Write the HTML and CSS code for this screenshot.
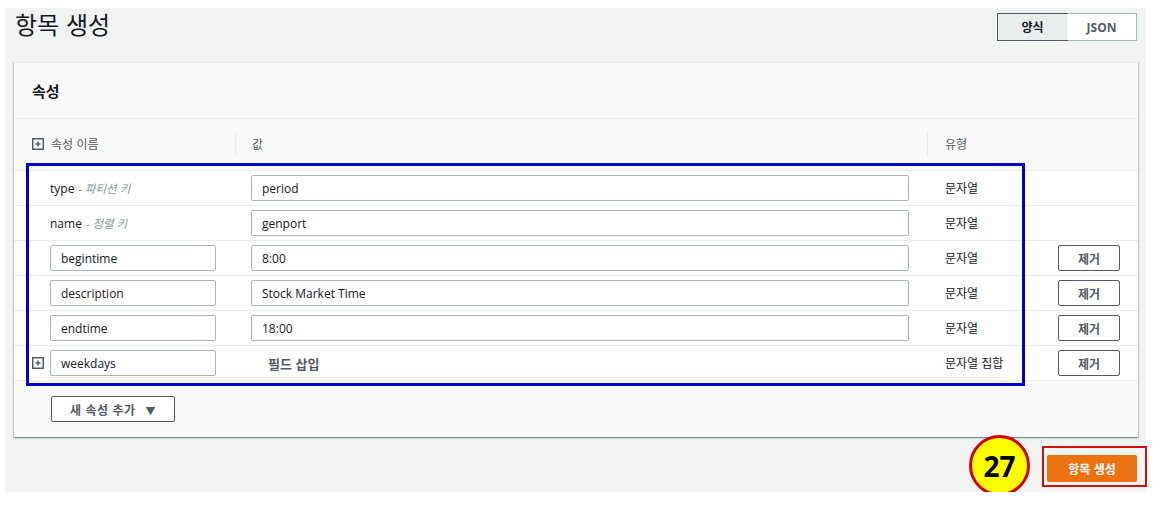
FILE: index.html
```html
<!DOCTYPE html>
<html lang="ko">
<head>
<meta charset="utf-8">
<title>항목 생성</title>
<link rel="stylesheet" href="styles.css">
</head>
<body>
<div class="page">
  <div class="top">
    <h1 class="title">항목 생성</h1>
    <div class="toggle">
      <button class="seg active">양식</button>
      <button class="seg">JSON</button>
    </div>
  </div>

  <section class="card">
    <div class="card-head">속성</div>
    <div class="table">
      <div class="row thead">
        <div class="cell c1"><svg class="plus" viewBox="0 0 12 12" width="12" height="12"><rect x="0.75" y="0.75" width="10.5" height="10.5" fill="none" stroke="#545b64" stroke-width="1.5"/><path d="M3.5 6h5M6 3.5v5" stroke="#545b64" stroke-width="1.5"/></svg><span class="hlabel">속성 이름</span></div>
        <div class="cell c2"><span class="hdiv"></span><span class="hlabel">값</span></div>
        <div class="cell c3"><span class="hdiv"></span><span class="hlabel">유형</span></div>
        <div class="cell c4"></div>
      </div>

      <div class="row">
        <div class="cell c1 pad"><span class="key">type</span><span class="keynote">- 파티션 키</span></div>
        <div class="cell c2"><input class="field val" value="period"></div>
        <div class="cell c3">문자열</div>
        <div class="cell c4"></div>
      </div>
      <div class="row">
        <div class="cell c1 pad"><span class="key">name</span><span class="keynote">- 정렬 키</span></div>
        <div class="cell c2"><input class="field val" value="genport"></div>
        <div class="cell c3">문자열</div>
        <div class="cell c4"></div>
      </div>
      <div class="row">
        <div class="cell c1 pad"><input class="field name" value="begintime"></div>
        <div class="cell c2"><input class="field val" value="8:00"></div>
        <div class="cell c3">문자열</div>
        <div class="cell c4"><button class="btn">제거</button></div>
      </div>
      <div class="row">
        <div class="cell c1 pad"><input class="field name" value="description"></div>
        <div class="cell c2"><input class="field val" value="Stock Market Time"></div>
        <div class="cell c3">문자열</div>
        <div class="cell c4"><button class="btn">제거</button></div>
      </div>
      <div class="row">
        <div class="cell c1 pad"><input class="field name" value="endtime"></div>
        <div class="cell c2"><input class="field val" value="18:00"></div>
        <div class="cell c3">문자열</div>
        <div class="cell c4"><button class="btn">제거</button></div>
      </div>
      <div class="row">
        <div class="cell c1"><svg class="plus" viewBox="0 0 12 12" width="12" height="12"><rect x="0.75" y="0.75" width="10.5" height="10.5" fill="none" stroke="#545b64" stroke-width="1.5"/><path d="M3.5 6h5M6 3.5v5" stroke="#545b64" stroke-width="1.5"/></svg><input class="field name" value="weekdays"></div>
        <div class="cell c2"><span class="insert">필드 삽입</span></div>
        <div class="cell c3">문자열 집합</div>
        <div class="cell c4"><button class="btn">제거</button></div>
      </div>
    </div>
    <div class="card-foot">
      <button class="btn add">새 속성 추가 <span class="caret">▼</span></button>
    </div>
    <div class="hl-blue"></div>
  </section>

  <div class="actions">
    <span class="badge">27</span>
    <button class="primary">항목 생성<span class="hl-red"></span></button>
  </div>
</div>
</body>
</html>
```

FILE: styles.css
```css
* { box-sizing: border-box; }

body {
  margin: 0;
  background: #ffffff;
  font-family: "Open Sans", "Noto Sans CJK KR", sans-serif;
  font-size: 12px;
  color: #16191f;
}

.page {
  position: relative;
  margin: 8px 0 0 5px;
  width: 1141px;
  height: 484px;
  background: #f2f3f3;
  padding: 0 8px 0 9px;
}

.top {
  display: flex;
  justify-content: space-between;
  align-items: flex-start;
  height: 54px;
}

.title {
  margin: 0 0 0 1px;
  font-family: "Noto Sans CJK KR", sans-serif;
  font-weight: 400;
  font-size: 24px;
  line-height: 31px;
  color: #16191f;
}

.toggle {
  margin-top: 5px;
  margin-right: 1px;
  display: flex;
  border: 1px solid #aab7b8;
  background: #fff;
}

.seg {
  width: 69px;
  height: 26px;
  border: 0;
  background: #fff;
  font-family: "Open Sans", "Noto Sans CJK KR", sans-serif;
  font-size: 12px;
  font-weight: 700;
  color: #545b64;
  padding: 0;
}

.seg.active {
  background: #eaeded;
  color: #16191f;
  outline: 1px solid #545b64;
}

.card {
  position: relative;
  height: 375px;
  background: #fafafa;
  border-top: 1px solid #eaeded;
  box-shadow: 0 1px 1px 0 rgba(0, 28, 36, 0.3), 1px 1px 1px 0 rgba(0, 28, 36, 0.15), -1px 1px 1px 0 rgba(0, 28, 36, 0.15);
}

.card-head {
  height: 56px;
  display: flex;
  align-items: center;
  padding-left: 18px;
  font-family: "Noto Sans CJK KR", sans-serif;
  font-size: 15px;
  font-weight: 700;
  color: #16191f;
  border-bottom: 1px solid #eaeded;
}

.row {
  display: grid;
  grid-template-columns: 221px 692px 113px 98px;
  height: 35px;
  background: #fff;
  border-bottom: 1px solid #eaeded;
  align-items: center;
}

.row.thead {
  height: 52px;
  background: #fafafa;
  border-bottom: 1px solid #eaeded;
  padding-bottom: 2px;
}

.cell {
  display: flex;
  align-items: center;
  height: 100%;
  position: relative;
}

.c1 { padding-left: 18px; gap: 6px; }
.c1.pad { padding-left: 36px; gap: 4px; }
.c2 { padding-left: 16px; }
.c3 { padding-left: 18px; color: #16191f; }
.c4 { padding-left: 18px; }

.thead .c1 { gap: 7px; }
.thead .c3 { padding-left: 18px; }
.thead .c2 { padding-left: 17px; }

.hdiv {
  position: absolute;
  left: 0;
  top: 13px;
  height: 24px;
  border-left: 1px solid #eaeded;
}

.hlabel {
  font-family: "Noto Sans CJK KR", sans-serif;
  color: #545b64;
}

.plus { display: block; flex: none; }

.key { color: #16191f; }
.keynote {
  color: #879596;
  font-style: italic;
  font-size: 11.5px;
}

.field {
  height: 26px;
  border: 1px solid #aab7b8;
  border-radius: 2px;
  padding: 0 10px;
  font-family: "Open Sans", "Noto Sans CJK KR", sans-serif;
  font-size: 12px;
  color: #16191f;
  background: #fff;
}

.field.name { width: 166px; }
.field.val { width: 658px; }

.insert {
  margin-left: 17px;
  font-family: "Noto Sans CJK KR", sans-serif;
  font-size: 13px;
  font-weight: 700;
  color: #545b64;
}

.btn {
  height: 26px;
  width: 62px;
  border: 1px solid #545b64;
  border-radius: 2px;
  background: #fff;
  font-family: "Noto Sans CJK KR", sans-serif;
  font-size: 12px;
  font-weight: 700;
  color: #545b64;
  padding: 0;
}

.card-foot {
  padding: 15px 0 0 37px;
}

.btn.add {
  width: 124px;
  letter-spacing: 0.5px;
}

.caret {
  font-size: 10px;
  margin-left: 6px;
}

.hl-blue {
  position: absolute;
  left: 12px;
  top: 100px;
  width: 999px;
  height: 223px;
  border: 3px solid #0000cc;
  pointer-events: none;
}

.actions {
  position: relative;
  display: flex;
  justify-content: flex-end;
  padding-top: 18px;
  padding-right: 1px;
}

.primary {
  position: relative;
  width: 90px;
  height: 27px;
  border: 0;
  border-radius: 2px;
  background: #ec7211;
  color: #fff;
  font-family: "Noto Sans CJK KR", sans-serif;
  font-size: 12px;
  font-weight: 700;
  padding: 0;
}

.hl-red {
  position: absolute;
  left: -5px;
  top: -9px;
  right: -10px;
  bottom: -5px;
  border: 2px solid #cc1111;
}

.badge {
  position: absolute;
  left: 955px;
  top: -2px;
  width: 61px;
  height: 61px;
  border-radius: 50%;
  background: #ffff00;
  border: 3px solid #d40000;
  display: flex;
  align-items: center;
  justify-content: center;
  font-family: "Open Sans", sans-serif;
  font-size: 28px;
  font-weight: 700;
  color: #000;
}
```
